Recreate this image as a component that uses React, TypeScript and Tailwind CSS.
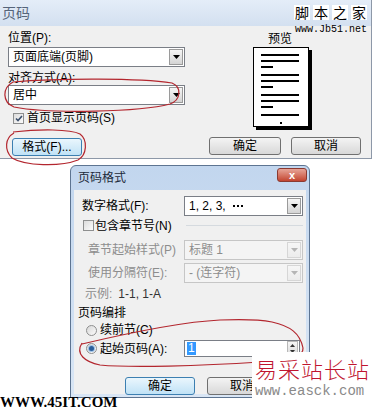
import React from 'react';

const ui = "font-['Liberation_Sans','Noto_Sans_CJK_SC',sans-serif]";

function Arrow({ color = '#000' }: { color?: string }) {
    return (
        <svg width="7" height="4" viewBox="0 0 7 4">
            <path d="M0 0h7L3.5 4z" fill={color} />
        </svg>
    );
}

function Select({ value, w, disabled }: { value: React.ReactNode; w: string; disabled?: boolean }) {
    return (
        <div
            className={`flex h-[20px] items-center border ${w} ${
                disabled ? 'border-[#c6c6c6] bg-[#f4f4f4] text-[#8d8d8d]' : 'border-[#7a7e86] bg-white text-black'
            }`}
        >
            <span className="flex flex-1 items-center whitespace-nowrap pl-[4px] text-[12px] leading-none">{value}</span>
            <div
                className={`mr-px flex h-[16px] w-[14px] items-center justify-center border bg-gradient-to-b ${
                    disabled ? 'border-[#d6d6d6] from-[#f6f6f6] to-[#ececec]' : 'border-[#9a9a9a] from-[#f6f6f6] to-[#d4d4d4]'
                }`}
            >
                <Arrow color={disabled ? '#b5b5b5' : '#000'} />
            </div>
        </div>
    );
}

function Check({ checked }: { checked?: boolean }) {
    return (
        <div className="flex h-[11px] w-[11px] items-center justify-center border border-[#8e8f8f] bg-gradient-to-br from-[#dcdcdc] to-[#fbfbfb]">
            {checked && (
                <svg width="8" height="7" viewBox="0 0 8 7">
                    <path d="M1 3.5l2 2L7 1" stroke="#3b4f6b" strokeWidth="1.6" fill="none" />
                </svg>
            )}
        </div>
    );
}

function Radio({ on }: { on?: boolean }) {
    return (
        <div className="flex h-[11px] w-[11px] items-center justify-center rounded-full border border-[#8e8f8f] bg-gradient-to-br from-[#d8d8d8] to-[#fbfbfb]">
            {on && <div className="h-[5px] w-[5px] rounded-full bg-[#2b5d9a] ring-1 ring-[#9cc1e6]" />}
        </div>
    );
}

function Btn({ label, w, blue }: { label: string; w: string; blue?: boolean }) {
    return (
        <div
            className={`flex h-[18px] items-center justify-center rounded-[3px] border bg-gradient-to-b text-[12px] leading-none ${w} ${
                blue ? 'border-[#3c7fb1] from-[#eaf6fd] to-[#c0e2f6]' : 'border-[#707070] from-[#f4f4f4] to-[#d8d8d8]'
            }`}
        >
            {label}
        </div>
    );
}

function PageLine({ short }: { short?: boolean }) {
    return <div className={`h-[2px] bg-black ${short ? 'w-[12px]' : 'w-[38px]'}`} />;
}

export default function App() {
    return (
        <div className={`relative h-[411px] w-[372px] overflow-hidden bg-white text-black ${ui}`}>
            {/* 页码 dialog */}
            <div className="h-[159px] border-r border-b border-[#8d98a8]">
                <div className="flex h-[26px] items-center bg-gradient-to-b from-[#e4edf8] to-[#d3e0f0] pl-[2px] text-[14px] text-[#56657a]">
                    页码
                </div>
                <div className="flex h-[132px] bg-[#f0f0f0]">
                    <div className="flex w-[186px] flex-col pl-[8px]">
                        <div className="mt-[5px] flex h-[14px] items-center text-[12px]">位置(P):</div>
                        <div className="mt-[2px]">
                            <Select value="页面底端(页脚)" w="w-[177px]" />
                        </div>
                        <div className="mt-[4px] flex h-[14px] items-center text-[12px]">对齐方式(A):</div>
                        <Select value="居中" w="w-[177px]" />
                        <div className="mt-[6px] flex h-[14px] items-center pl-[5px] text-[12px]">
                            <Check checked />
                            <span className="ml-[3px]">首页显示页码(S)</span>
                        </div>
                        <div className="mt-[13px] ml-[4px]">
                            <Btn label="格式(F)..." w="w-[70px]" blue />
                        </div>
                    </div>
                    <div className="flex flex-1 flex-col">
                        <div className="mt-[6px] flex h-[14px] items-center pl-[82px] text-[12px]">预览</div>
                        <div className="mt-[1px] ml-[67px] flex h-[80px] w-[56px] flex-col border border-black bg-white pt-[6px] pl-[7px] shadow-[3px_3px_0_#000]">
                            {[0, 1, 2].map((g) => (
                                <div key={g} className="mb-[6px] flex flex-col gap-[4px]">
                                    <PageLine />
                                    <PageLine />
                                    <PageLine short />
                                </div>
                            ))}
                            <PageLine />
                            <div className="mt-[6px] ml-[19px] h-[2px] w-[2px] bg-black" />
                        </div>
                        <div className="mt-[10px] flex">
                            <div className="ml-[23px]">
                                <Btn label="确定" w="w-[72px]" />
                            </div>
                            <div className="ml-[10px]">
                                <Btn label="取消" w="w-[70px]" />
                            </div>
                        </div>
                    </div>
                </div>
            </div>

            {/* 页码格式 dialog */}
            <div className="mt-[6px] ml-[70px] w-[240px] rounded-t-[6px] border border-[#5d7491] bg-gradient-to-b from-[#c2d6ee] to-[#d9e6f5]">
                <div className="flex h-[24px] items-center justify-between pl-[7px] pr-[2px]">
                    <span className="text-[12px] text-[#1d2a3a]">页码格式</span>
                    <div className="mb-[6px] flex h-[14px] w-[30px] items-center justify-center rounded-[3px] border border-[#8b3a31] bg-gradient-to-b from-[#e6a497] to-[#c2432f] text-[11px] font-bold leading-none text-white">
                        x
                    </div>
                </div>
                <div className="mx-[3px] mb-[3px] flex h-[204px] flex-col bg-[#f0f0f0] text-[12px]">
                    <div className="mt-[6px] flex h-[20px] items-center">
                        <span className="w-[110px] pl-[8px]">数字格式(F):</span>
                        <Select
                            value={
                                <>
                                    1, 2, 3,
                                    <span className="ml-[7px] flex gap-[2px]">
                                        <i className="h-[2px] w-[2px] bg-black" />
                                        <i className="h-[2px] w-[2px] bg-black" />
                                        <i className="h-[2px] w-[2px] bg-black" />
                                    </span>
                                </>
                            }
                            w="w-[119px]"
                        />
                    </div>
                    <div className="mt-[3px] flex h-[13px] items-center pl-[9px]">
                        <Check />
                        <span className="ml-[1px]">包含章节号(N)</span>
                        <div className="ml-[14px] mr-[3px] h-px flex-1 bg-[#d5dadf]" />
                    </div>
                    <div className="mt-[8px] flex h-[20px] items-center">
                        <span className="w-[110px] pl-[14px] text-[#8d8d8d]">章节起始样式(P)</span>
                        <Select value="标题 1" w="w-[119px]" disabled />
                    </div>
                    <div className="mt-[3px] flex h-[20px] items-center">
                        <span className="w-[110px] pl-[14px] text-[#8d8d8d]">使用分隔符(E):</span>
                        <Select value="-  (连字符)" w="w-[119px]" disabled />
                    </div>
                    <div className="mt-[4px] flex h-[14px] items-center pl-[11px]">
                        <span className="text-[#8d8d8d]">示例:</span>
                        <span className="ml-[6px] text-[#333]">1-1, 1-A</span>
                    </div>
                    <div className="mt-[5px] flex h-[14px] items-center pl-[4px]">页码编排</div>
                    <div className="mt-[3px] flex h-[14px] items-center pl-[12px]">
                        <Radio />
                        <span className="ml-[3px]">续前节(C)</span>
                    </div>
                    <div className="mt-[3px] flex h-[17px] items-center">
                        <div className="flex w-[110px] items-center pl-[12px]">
                            <Radio on />
                            <span className="ml-[3px]">起始页码(A):</span>
                        </div>
                        <div className="flex h-[17px] w-[116px] items-center border border-[#7a7e86] bg-white">
                            <span className="ml-[2px] bg-[#3399ff] px-[1px] leading-[13px] text-white">1</span>
                            <div className="ml-auto mr-px flex h-[15px] w-[11px] flex-col border border-[#b8b8b8] bg-gradient-to-b from-[#f6f6f6] to-[#dadada]">
                                <div className="flex flex-1 items-center justify-center">
                                    <svg width="5" height="3" viewBox="0 0 5 3">
                                        <path d="M0 3h5L2.5 0z" fill="#333" />
                                    </svg>
                                </div>
                                <div className="flex flex-1 items-center justify-center">
                                    <svg width="5" height="3" viewBox="0 0 5 3">
                                        <path d="M0 0h5L2.5 3z" fill="#333" />
                                    </svg>
                                </div>
                            </div>
                        </div>
                    </div>
                    <div className="mt-[20px] flex">
                        <div className="ml-[51px]">
                            <Btn label="确定" w="w-[70px]" blue />
                        </div>
                        <div className="ml-[12px]">
                            <Btn label="取消" w="w-[70px]" />
                        </div>
                    </div>
                </div>
            </div>

            {/* red hand-drawn marks */}
            <svg className="pointer-events-none absolute inset-0" width="372" height="411" viewBox="0 0 372 411">
                <g stroke="#b3262e" strokeWidth="1.2" fill="none">
                    <path d="M13 82 C 60 78, 140 78, 172 83 C 182 87, 181 100, 170 104 C 140 112, 50 114, 14 107 C 2 102, 2 88, 13 82" />
                    <path d="M13 132 C 40 129, 70 129, 80 134 C 88 140, 87 155, 78 160 C 60 167, 25 166, 12 158 C 4 150, 5 138, 14 133" />
                    <path d="M82 344 C 120 335, 180 322, 220 320 C 245 319, 262 320, 272 322 C 290 326, 300 333, 303 348 C 304 356, 290 360, 260 362 C 200 366, 130 368, 100 365 C 85 362, 75 354, 82 343" />
                </g>
            </svg>

            {/* jb51 mark */}
            <div className="absolute top-[5px] right-[5px] flex flex-col items-end">
                <div className="flex gap-[3px] font-['Noto_Sans_CJK_SC',sans-serif] text-[14px] leading-[15px]">
                    {['脚', '本', '之', '家'].map((c) => (
                        <span key={c} className="bg-white px-[1px]">
                            {c}
                        </span>
                    ))}
                </div>
                <div className="mt-[5px] font-['Liberation_Mono',monospace] text-[10px] leading-[10px]">www.Jb51.net</div>
            </div>

            {/* easck mark */}
            <div className="absolute top-[352px] left-[252px] flex h-[59px] w-[120px] flex-col bg-white pl-[3px]">
                <div className="mt-[4px] font-['Noto_Sans_CJK_SC',serif] text-[22px] font-light leading-[24px] tracking-[1px] text-[#c0152f]">
                    易采站长站
                </div>
                <div className="mt-[4px] font-['Liberation_Mono',monospace] text-[14px] leading-[14px] text-[#8a8a8a]">
                    www.easck.com
                </div>
            </div>

            {/* 45it mark */}
            <div className="absolute bottom-[2px] left-0 font-['Liberation_Serif',serif] text-[15px] font-bold leading-[13px]">
                WWW.45IT.COM
            </div>
        </div>
    );
}
